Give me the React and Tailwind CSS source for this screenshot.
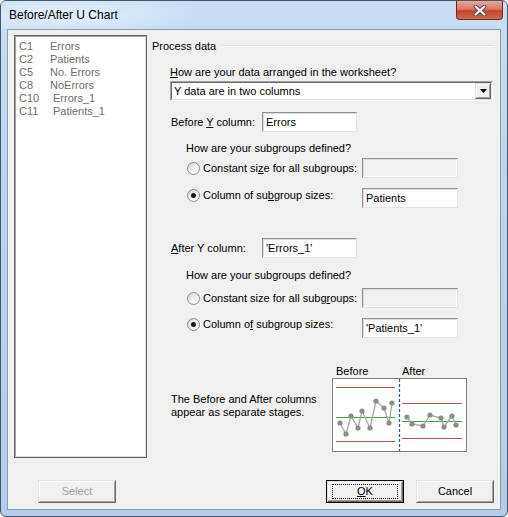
import React from 'react'

const FONT = "font-['Liberation_Sans',Arial,sans-serif]"

function Acc({ children }) {
  return <span className="underline underline-offset-[1px]">{children}</span>
}

function Radio({ checked }) {
  return (
    <span className="w-[13px] h-[13px] shrink-0 rounded-full border border-[#8c8c8c] bg-[linear-gradient(135deg,#cfcfcf_0%,#f4f4f4_55%,#ffffff_100%)] flex items-center justify-center">
      {checked && <span className="w-[5px] h-[5px] rounded-full bg-[#1a1a1a]" />}
    </span>
  )
}

function TextBox({ value, disabled, width }) {
  return (
    <div
      className={`h-[20px] ${width} border border-t-[#8f8f8f] border-l-[#8f8f8f] border-r-[#e3e3e3] border-b-[#e3e3e3] ${disabled ? 'bg-[#f0f0f0]' : 'bg-white'}`}
    >
      <div className="h-full border border-t-[#dcdcdc] border-l-[#dcdcdc] border-r-white border-b-white flex items-center pl-[2px] text-black whitespace-pre">
        {value}
      </div>
    </div>
  )
}

function Raised({ children, className = '' }) {
  return (
    <div className={`border border-t-[#e3e3e3] border-l-[#e3e3e3] border-r-[#696969] border-b-[#696969] ${className}`}>
      <div className="h-full border border-t-white border-l-white border-r-[#a0a0a0] border-b-[#a0a0a0] bg-[#f0f0f0]">
        {children}
      </div>
    </div>
  )
}

function Button({ children, def, disabled }) {
  const face = (
    <Raised className="h-full w-full">
      <div className={`h-full flex items-center justify-center ${disabled ? 'text-[#a0a0a0]' : 'text-black'}`}>
        {def ? (
          <div className="h-[15px] w-[66px] border border-dotted border-black flex items-center justify-center">{children}</div>
        ) : (
          children
        )}
      </div>
    </Raised>
  )
  if (def) return <div className="w-[78px] h-[23px] border border-black">{face}</div>
  return <div className="w-[78px] h-[23px]">{face}</div>
}

function StageChart() {
  const before = [[7, 44], [13, 55], [18, 37], [25, 49], [29, 32], [37, 49], [43, 22], [51, 29], [56, 44], [59, 24]]
  const after = [[74, 38], [79, 45], [90, 47], [97, 36], [108, 39], [111, 48], [119, 37], [123, 46]]
  const pts = (a) => a.map((p) => p.join(',')).join(' ')
  return (
    <svg width="133" height="72" viewBox="0 0 133 72">
      <line x1="3" y1="8.5" x2="62" y2="8.5" stroke="#c0504d" strokeWidth="1" />
      <line x1="3" y1="38.5" x2="62" y2="38.5" stroke="#4ba345" strokeWidth="1" />
      <line x1="3" y1="62.5" x2="62" y2="62.5" stroke="#c0504d" strokeWidth="1" />
      <line x1="69" y1="24.5" x2="129" y2="24.5" stroke="#c0504d" strokeWidth="1" />
      <line x1="69" y1="42.5" x2="129" y2="42.5" stroke="#4ba345" strokeWidth="1" />
      <line x1="69" y1="59.5" x2="129" y2="59.5" stroke="#c0504d" strokeWidth="1" />
      <line x1="66.5" y1="0" x2="66.5" y2="72" stroke="#2c5d9a" strokeWidth="1.2" strokeDasharray="3 2" />
      <polyline points={pts(before)} fill="none" stroke="#a6a6a6" strokeWidth="1.3" />
      <polyline points={pts(after)} fill="none" stroke="#a6a6a6" strokeWidth="1.3" />
      {[...before, ...after].map(([x, y], i) => (
        <circle key={i} cx={x} cy={y} r="2.6" fill="#8c8c8c" />
      ))}
    </svg>
  )
}

// gaps differ a little between the two blocks in the original dialog
function SubgroupBlock({ sizeAcc, colLabel, colValue, gaps }) {
  return (
    <>
      <div className={`${gaps[0]} h-[16px] ml-[34px] flex items-center`}>How are your subgroups defined?</div>
      <div className={`${gaps[1]} h-[20px] ml-[35px] flex items-center`}>
        <div className="w-[175px] flex items-center gap-[3px]">
          <Radio />
          <span>{sizeAcc}</span>
        </div>
        <TextBox value="" disabled width="w-[96px]" />
      </div>
      <div className={`${gaps[2]} ml-[35px] flex items-start`}>
        <div className="w-[175px] h-[16px] flex items-center gap-[3px]">
          <Radio checked />
          <span>{colLabel}</span>
        </div>
        <div className={gaps[3]}>
          <TextBox value={colValue} width="w-[96px]" />
        </div>
      </div>
    </>
  )
}

export default function App() {
  const columns = [
    ['C1', 'Errors', 'pl-[31px]'],
    ['C2', 'Patients', 'pl-[31px]'],
    ['C5', 'No. Errors', 'pl-[31px]'],
    ['C8', 'NoErrors', 'pl-[31px]'],
    ['C10', 'Errors_1', 'pl-[34px]'],
    ['C11', 'Patients_1', 'pl-[34px]'],
  ]

  return (
    <div className={`${FONT} w-[508px] h-[517px] rounded-[6px] border border-[#4a5563] bg-[linear-gradient(180deg,#c9def4_0%,#bdd5ee_35%,#b3cde9_100%)] flex flex-col text-[11px] text-black`}>
      {/* Title bar */}
      <div className="h-[28px] flex items-start justify-between bg-[radial-gradient(ellipse_140px_22px_at_60px_14px,#e6f0fb_0%,rgba(230,240,251,0)_100%)]">
        <div className="pl-[8px] h-[28px] flex items-center text-[12px] text-black">Before/After U Chart</div>
        <div className="mr-[4px] w-[47px] h-[19px] rounded-b-[4px] border border-t-0 border-[#6b2a22] bg-[linear-gradient(180deg,#e9a99a_0%,#d77a66_45%,#c2442e_55%,#cf6a52_100%)] flex items-center justify-center">
          <svg width="14" height="11" viewBox="0 0 14 11">
            <path d="M2.5 1.5 L11.5 9.5 M11.5 1.5 L2.5 9.5" stroke="#4d4d4d" strokeWidth="4" strokeLinecap="round" />
            <path d="M2.5 1.5 L11.5 9.5 M11.5 1.5 L2.5 9.5" stroke="#ffffff" strokeWidth="2" strokeLinecap="round" />
          </svg>
        </div>
      </div>

      {/* Client area */}
      <div className="mx-[6px] mb-[6px] flex-1 border border-[#8d9db0] bg-[#f0f0f0] flex flex-col">
        <div className="flex">
          {/* Column list */}
          <div className="ml-[6px] mt-[5px] w-[133px] h-[423px] border border-[#646464]">
            <div className="h-full border border-t-[#a0a0a0] border-l-[#a0a0a0] border-r-[#dcdcdc] border-b-[#dcdcdc] bg-white pt-[3px] pl-[3px] text-[#6d6d6d]">
              {columns.map(([c, name, pad]) => (
                <div key={c} className="h-[13px] leading-[13px] flex">
                  <span className="w-0 whitespace-nowrap">{c}</span>
                  <span className={pad}>{name}</span>
                </div>
              ))}
            </div>
          </div>

          {/* Right panel */}
          <div className="ml-[5px] flex-1 pt-[8px] pr-[6px] flex flex-col">
            <div className="h-[16px] flex items-center gap-[6px]">
              <span>Process data</span>
              <div className="flex-1 h-[2px] border-t border-[#d5dfe5] border-b border-b-white" />
            </div>

            <div className="mt-[10px] h-[16px] ml-[18px] flex items-center">
              <span><Acc>H</Acc>ow are your data arranged in the worksheet?</span>
            </div>

            <div className="mt-[1px] ml-[18px] w-[323px] h-[20px] border border-t-[#a0a0a0] border-l-[#a0a0a0] border-r-white border-b-white">
              <div className="h-full border border-t-[#696969] border-l-[#696969] border-r-[#e3e3e3] border-b-[#e3e3e3] bg-white flex items-center">
                <span className="flex-1 pl-[2px]">Y data are in two columns</span>
                <Raised className="w-[16px] h-[16px]">
                  <div className="h-full flex items-center justify-center">
                    <svg width="7" height="4" viewBox="0 0 7 4">
                      <path d="M0 0 H7 L3.5 4 Z" fill="#000" />
                    </svg>
                  </div>
                </Raised>
              </div>
            </div>

            <div className="mt-[11px] h-[20px] ml-[19px] flex items-center">
              <span className="w-[91px]">Before <Acc>Y</Acc> column:</span>
              <TextBox value="Errors" width="w-[95px]" />
            </div>

            <SubgroupBlock
              sizeAcc={<>Constant si<Acc>z</Acc>e for all subgroups:</>}
              colLabel={<>Column of su<Acc>b</Acc>group sizes:</>}
              colValue="Patients"
              gaps={['mt-[8px]', 'mt-[2px]', 'mt-[9px]', 'mt-[1px]']}
            />

            <div className="mt-[30px] h-[20px] ml-[19px] flex items-center">
              <span className="w-[91px]"><Acc>A</Acc>fter Y column:</span>
              <TextBox value="'Errors_1'" width="w-[95px]" />
            </div>

            <SubgroupBlock
              sizeAcc={<>Constant size for all subg<Acc>r</Acc>oups:</>}
              colLabel={<>Column o<Acc>f</Acc> subgroup sizes:</>}
              colValue="'Patients_1'"
              gaps={['mt-[9px]', 'mt-[5px]', 'mt-[8px]', 'mt-[2px]']}
            />

            <div className="mt-[26px] ml-[19px] flex">
              <div className="w-[161px] pt-[29px] leading-[13px]">
                <div>The Before and After columns</div>
                <div>appear as separate stages.</div>
              </div>
              <div className="w-[135px] flex flex-col">
                <div className="h-[14px] flex items-center">
                  <span className="pl-[4px] w-[70px]">Before</span>
                  <span>After</span>
                </div>
                <div className="h-[74px] border border-[#7f7f7f] bg-white">
                  <StageChart />
                </div>
              </div>
            </div>
          </div>
        </div>

        {/* Buttons */}
        <div className="mt-[22px] flex items-center">
          <div className="ml-[30px]">
            <Button disabled>Select</Button>
          </div>
          <div className="flex-1" />
          <Button def><span><Acc>O</Acc>K</span></Button>
          <div className="ml-[12px] mr-[6px]">
            <Button>Cancel</Button>
          </div>
        </div>
      </div>
    </div>
  )
}
